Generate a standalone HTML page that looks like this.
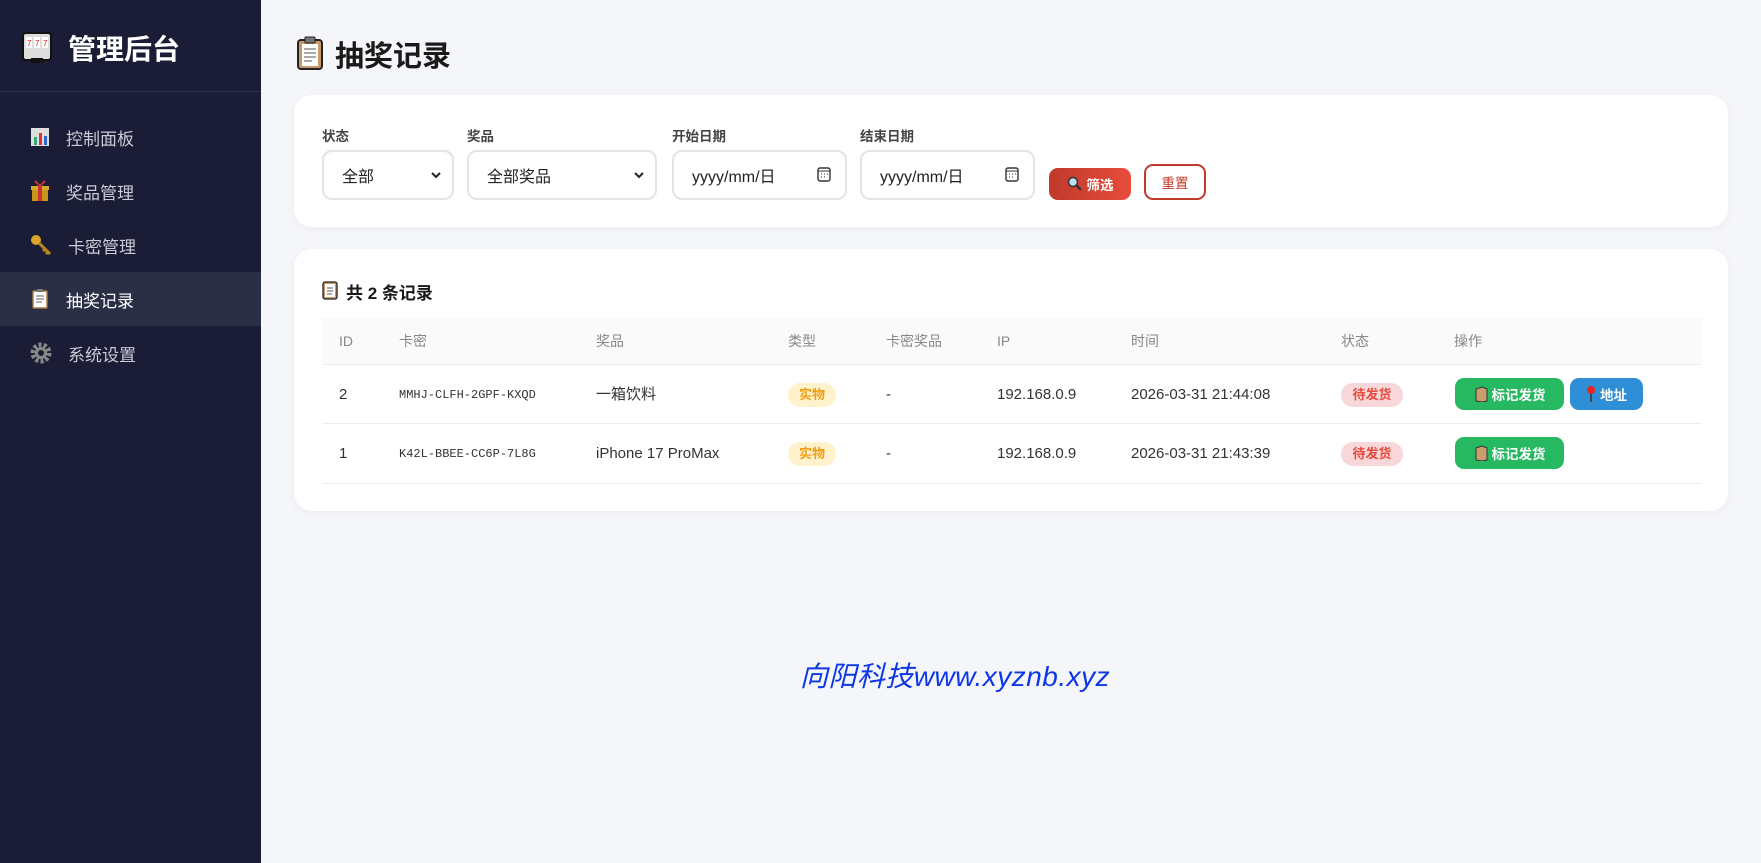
<!DOCTYPE html>
<html><head><meta charset="utf-8"><style>
*{box-sizing:border-box;margin:0;padding:0}
body{width:1761px;height:863px;overflow:hidden;background:#f5f6fa;font-family:"Liberation Sans","Noto Sans CJK SC",sans-serif;position:relative;color:#222}
.sb{position:absolute;left:0;top:0;width:261px;height:863px;background:#1a1d35}
.logo{position:absolute;left:22px;top:28px;display:flex;align-items:center}
.logo span{color:#fff;font-size:28px;font-weight:bold;margin-left:16px}
.div{position:absolute;left:0;top:91px;width:261px;height:1px;background:#2c3048}
.nav{position:absolute;left:0;width:261px;height:54px;display:flex;align-items:center;padding-left:30px;color:#c9cbd6;font-size:17px}
.nav svg{margin-right:16px}
.nav.act{background:#2b2f46;color:#fff}
.abs{position:absolute}
.card{position:absolute;left:294px;width:1434px;background:#fff;border-radius:18px;box-shadow:0 2px 10px rgba(0,0,0,.04)}
.lbl{position:absolute;top:125px;font-size:13.5px;font-weight:bold;color:#444}
.inp{position:absolute;top:150px;height:50px;border:2px solid #e4e4e4;border-radius:10px;background:#fff;font-size:16px;color:#222;display:flex;align-items:center;padding-left:18px}
.chev{position:absolute;right:10px;top:16px}
.th{position:absolute;top:318px;font-size:14px;color:#888;line-height:47px}
.td{position:absolute;font-size:15px;color:#333}
.badge{position:absolute;height:24px;border-radius:12px;font-size:13px;font-weight:bold;line-height:24px;text-align:center}
.btn{position:absolute;height:32px;border-radius:9px;color:#fff;font-size:13.5px;font-weight:bold;display:flex;align-items:center;justify-content:center;gap:4px}
</style></head><body>
<div class="sb">
 <div class="logo"><svg width="30" height="32" viewBox="0 0 30 32"><rect x="1" y="1" width="28" height="27" rx="3" fill="#ddd" stroke="#111" stroke-width="2"/><rect x="4" y="5" width="6" height="11" fill="#fff"/><rect x="12" y="5" width="6" height="11" fill="#fff"/><rect x="20" y="5" width="6" height="11" fill="#fff"/><text x="5" y="14" font-size="8" fill="#d22">7</text><text x="13" y="14" font-size="8" fill="#d22">7</text><text x="21" y="14" font-size="8" fill="#d22">7</text><rect x="9" y="26" width="12" height="5" fill="#111"/></svg><span>管理后台</span></div>
 <div class="div"></div>
 <div class="nav" style="top:110px"><svg width="20" height="20"><rect x="1" y="1" width="18" height="18" fill="#ddd"/><rect x="4" y="10" width="3" height="8" fill="#3a7"/><rect x="9" y="6" width="3" height="12" fill="#d33"/><rect x="14" y="9" width="3" height="9" fill="#36c"/></svg>控制面板</div>
 <div class="nav" style="top:164px"><svg width="20" height="22"><rect x="2" y="8" width="16" height="13" fill="#c9961a"/><rect x="1" y="6" width="18" height="4" fill="#d8a82a"/><rect x="8" y="6" width="4" height="15" fill="#c33"/><path d="M10 6 L5 1 M10 6 L15 1" stroke="#c33" stroke-width="2"/></svg>奖品管理</div>
 <div class="nav" style="top:218px"><svg width="22" height="22"><circle cx="6" cy="6" r="5" fill="#d9a52a"/><path d="M9 9 L20 20 M15 15 L13 17 M18 18 L16 20" stroke="#b8871a" stroke-width="3"/></svg>卡密管理</div>
 <div class="nav act" style="top:272px"><svg width="20" height="22"><rect x="2" y="2" width="16" height="19" rx="2" fill="#c89a6a" stroke="#333"/><rect x="4" y="4" width="12" height="15" fill="#fff"/><rect x="7" y="1" width="6" height="3" fill="#777"/><path d="M6 8h8M6 11h8M6 14h6" stroke="#666"/></svg>抽奖记录</div>
 <div class="nav" style="top:326px"><svg width="22" height="22"><circle cx="11" cy="11" r="8" fill="none" stroke="#888" stroke-width="5" stroke-dasharray="3 2"/><circle cx="11" cy="11" r="6" fill="#888"/><circle cx="11" cy="11" r="3" fill="#1a1d35"/></svg>系统设置</div>
</div>

<svg class="abs" style="left:296px;top:36px" width="28" height="34"><rect x="2" y="4" width="24" height="29" rx="3" fill="#c89a6a" stroke="#222" stroke-width="2"/><rect x="6" y="8" width="16" height="22" fill="#fff"/><rect x="9" y="1" width="10" height="6" rx="1" fill="#777" stroke="#222"/><path d="M8 13h12M8 17h12M8 21h12M8 25h8" stroke="#555"/></svg>
<div class="abs" style="left:335px;top:33px;font-size:29px;font-weight:bold;color:#1a1a1a">抽奖记录</div>

<div class="card" style="top:95px;height:132px"></div>
<div class="lbl" style="left:322px">状态</div>
<div class="lbl" style="left:467px">奖品</div>
<div class="lbl" style="left:672px">开始日期</div>
<div class="lbl" style="left:860px">结束日期</div>
<div class="inp" style="left:322px;width:132px">全部<svg class="chev" width="12" height="14"><path d="M2 5l4 4 4-4" stroke="#222" stroke-width="2" fill="none"/></svg></div>
<div class="inp" style="left:467px;width:190px">全部奖品<svg class="chev" width="12" height="14"><path d="M2 5l4 4 4-4" stroke="#222" stroke-width="2" fill="none"/></svg></div>
<div class="inp" style="left:672px;width:175px">yyyy/mm/日<svg class="chev" style="top:14px;right:14px" width="14" height="16"><rect x="1" y="2" width="12" height="13" rx="2" fill="none" stroke="#333" stroke-width="1.4"/><path d="M1 5h12" stroke="#333"/><path d="M4 8h1M7 8h1M10 8h1M4 11h1M7 11h1" stroke="#333"/></svg></div>
<div class="inp" style="left:860px;width:175px">yyyy/mm/日<svg class="chev" style="top:14px;right:14px" width="14" height="16"><rect x="1" y="2" width="12" height="13" rx="2" fill="none" stroke="#333" stroke-width="1.4"/><path d="M1 5h12" stroke="#333"/><path d="M4 8h1M7 8h1M10 8h1M4 11h1M7 11h1" stroke="#333"/></svg></div>
<div class="btn" style="left:1049px;top:168px;width:82px;height:32px;background:linear-gradient(90deg,#c0392b,#e74c3c)"><svg width="16" height="16"><circle cx="6" cy="6" r="4.5" fill="#bde" stroke="#333" stroke-width="1.5"/><path d="M9 9l5 5" stroke="#333" stroke-width="2.5"/></svg>筛选</div>
<div class="btn" style="left:1144px;top:164px;width:62px;height:36px;background:#fff;border:2px solid #c0392b;color:#c0392b;font-weight:normal">重置</div>

<div class="card" style="top:249px;height:262px"></div>
<svg class="abs" style="left:322px;top:280px" width="16" height="20"><rect x="1" y="2" width="14" height="17" rx="2" fill="#c89a6a" stroke="#222" stroke-width="1.3"/><rect x="3" y="4" width="10" height="13" fill="#fff"/><path d="M5 8h6M5 11h6M5 14h5" stroke="#555"/></svg>
<div class="abs" style="left:346px;top:279px;font-size:17px;font-weight:bold;color:#1a1a1a">共 2 条记录</div>

<div class="abs" style="left:322px;top:318px;width:1380px;height:47px;background:#fafafa;border-bottom:1px solid #eee"></div>
<div class="th" style="left:339px">ID</div><div class="th" style="left:399px">卡密</div><div class="th" style="left:596px">奖品</div><div class="th" style="left:788px">类型</div><div class="th" style="left:886px">卡密奖品</div><div class="th" style="left:997px">IP</div><div class="th" style="left:1131px">时间</div><div class="th" style="left:1341px">状态</div><div class="th" style="left:1454px">操作</div>
<div class="abs" style="left:322px;top:423px;width:1380px;height:1px;background:#eee"></div>
<div class="abs" style="left:322px;top:483px;width:1380px;height:1px;background:#eee"></div>

<div class="td" style="left:339px;top:386px">2</div>
<div class="td" style="left:399px;top:388px;font-family:'Liberation Mono',monospace;font-size:12px">MMHJ-CLFH-2GPF-KXQD</div>
<div class="td" style="left:596px;top:383px">一箱饮料</div>
<div class="badge" style="left:788px;top:383px;width:48px;background:#fff2cc;color:#f39c12">实物</div>
<div class="td" style="left:886px;top:386px">-</div>
<div class="td" style="left:997px;top:386px">192.168.0.9</div>
<div class="td" style="left:1131px;top:386px">2026-03-31 21:44:08</div>
<div class="badge" style="left:1341px;top:383px;width:62px;background:#f8d7da;color:#e74c3c">待发货</div>
<div class="btn" style="left:1455px;top:378px;width:109px;background:#27b862"><svg width="14" height="16"><path d="M2 3l6-2 5 2v12l-5 1-6-1z" fill="#c8a070" stroke="#333"/></svg>标记发货</div>
<div class="btn" style="left:1570px;top:378px;width:73px;background:#2e8fd6"><svg width="10" height="18"><circle cx="5" cy="5" r="4" fill="#e22"/><path d="M5 9v8" stroke="#333" stroke-width="1.5"/></svg>地址</div>

<div class="td" style="left:339px;top:445px">1</div>
<div class="td" style="left:399px;top:447px;font-family:'Liberation Mono',monospace;font-size:12px">K42L-BBEE-CC6P-7L8G</div>
<div class="td" style="left:596px;top:445px">iPhone 17 ProMax</div>
<div class="badge" style="left:788px;top:442px;width:48px;background:#fff2cc;color:#f39c12">实物</div>
<div class="td" style="left:886px;top:445px">-</div>
<div class="td" style="left:997px;top:445px">192.168.0.9</div>
<div class="td" style="left:1131px;top:445px">2026-03-31 21:43:39</div>
<div class="badge" style="left:1341px;top:442px;width:62px;background:#f8d7da;color:#e74c3c">待发货</div>
<div class="btn" style="left:1455px;top:437px;width:109px;background:#27b862"><svg width="14" height="16"><path d="M2 3l6-2 5 2v12l-5 1-6-1z" fill="#c8a070" stroke="#333"/></svg>标记发货</div>

<div class="abs" style="left:455px;width:1000px;top:655px;text-align:center;font-size:28px;font-style:italic;color:#0d36e6;letter-spacing:0.5px">向阳科技www.xyznb.xyz</div>
</body></html>
